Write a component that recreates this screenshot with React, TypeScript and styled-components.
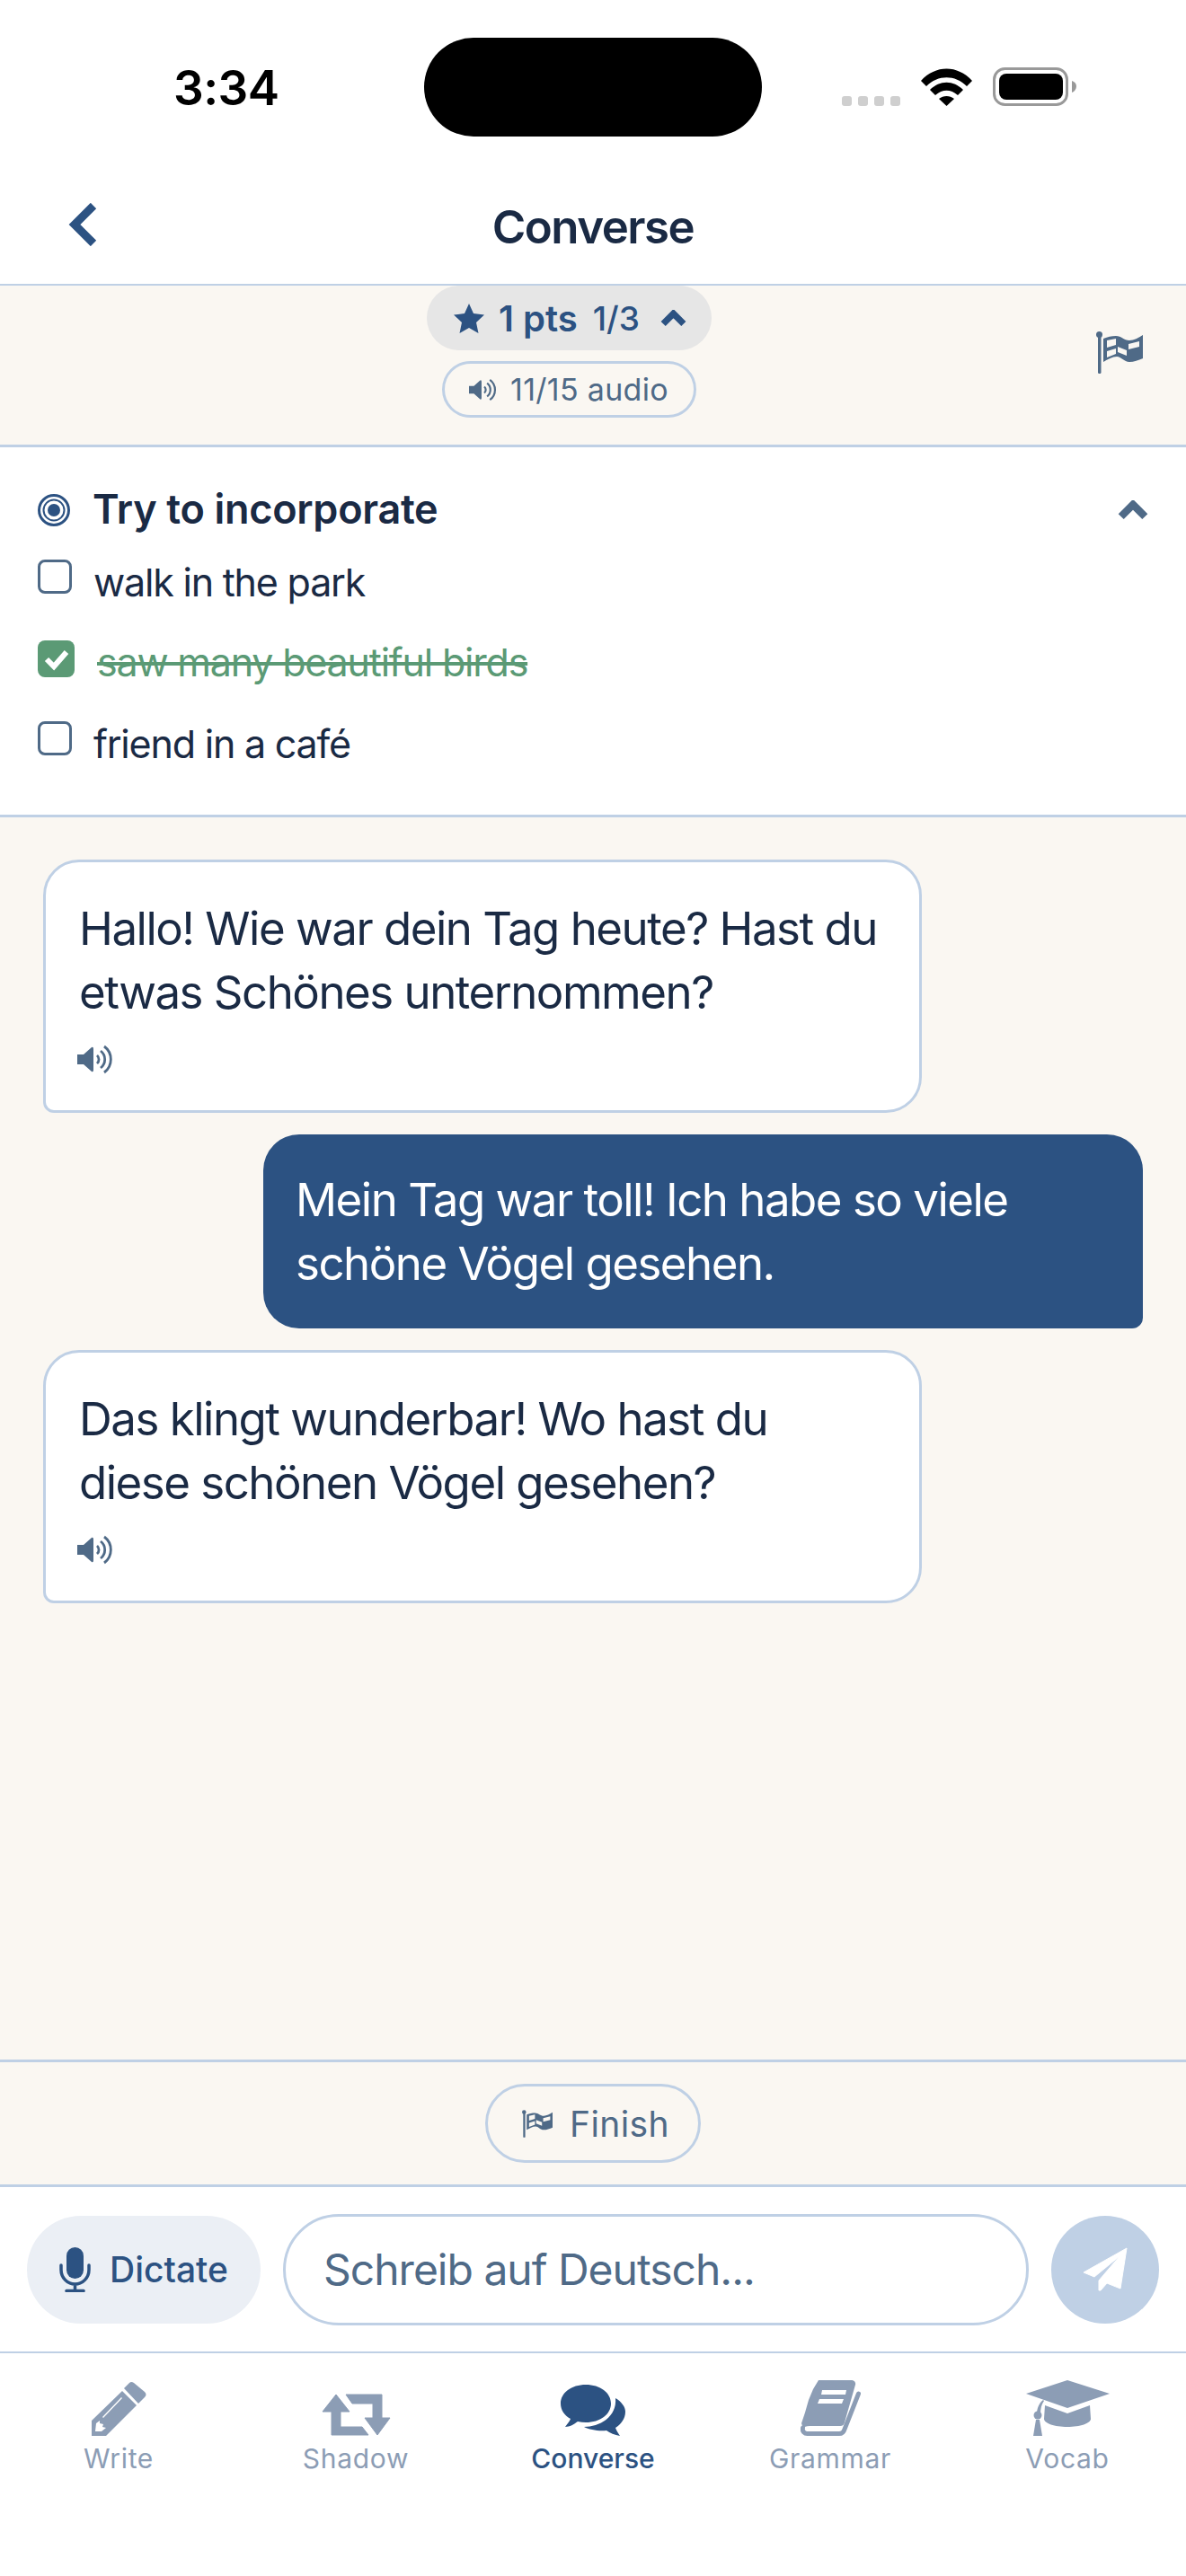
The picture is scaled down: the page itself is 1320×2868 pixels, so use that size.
import styled, { createGlobalStyle } from "styled-components";

const ink = "#1a2a44";
const blue = "#2c5282";
const muted = "#4f6a87";
const line = "#bfd0e5";
const cream = "#faf7f2";
const navGrey = "#8c9db5";
const green = "#5b9a75";

const GlobalStyle = createGlobalStyle`
  html, body {
    margin: 0;
    padding: 0;
    background: #ffffff;
  }
  * {
    box-sizing: border-box;
  }
  body {
    font-family: Inter, "Noto Sans", sans-serif;
  }
`;

const Page = styled.div`
  display: flex;
  flex-direction: column;
  width: 1320px;
  height: 2868px;
  color: ${ink};
  background: #ffffff;
`;

const StatusBar = styled.div`
  display: grid;
  grid-template-columns: 472px 376px 1fr;
  height: 152px;
  padding-top: 42px;
  flex-shrink: 0;
`;

const Time = styled.div`
  padding-left: 193px;
  padding-top: 29px;
  font-size: 53px;
  line-height: 54px;
  font-weight: 600;
  letter-spacing: -0.5px;
  color: #000000;
`;

const Island = styled.div`
  height: 110px;
  background: #000000;
  border-radius: 55px;
`;

const StatusIcons = styled.div`
  display: flex;
  align-items: flex-end;
  height: 76px;
  padding-left: 89px;
`;

const Dots = styled.div`
  display: flex;
  gap: 7px;
  margin-right: 23px;
`;

const Dot = styled.span`
  width: 11px;
  height: 11px;
  border-radius: 3px;
  background: #cfcfcf;
`;

const Header = styled.div`
  display: flex;
  align-items: center;
  justify-content: center;
  position: relative;
  height: 166px;
  flex-shrink: 0;
  border-bottom: 2px solid ${line};
`;

const BackIcon = styled.svg`
  position: absolute;
  left: 76px;
  top: 74px;
`;

const Title = styled.h1`
  margin: 0;
  padding-top: 36px;
  font-size: 51px;
  font-weight: 600;
  letter-spacing: -1.5px;
  color: ${ink};
`;

const StatsBar = styled.div`
  display: flex;
  height: 180px;
  flex-shrink: 0;
  background: ${cream};
  border-bottom: 3px solid ${line};
`;

const PillColumn = styled.div`
  display: flex;
  flex: 1;
  flex-direction: column;
  align-items: center;
  gap: 12px;
  padding-left: 47px;
`;

const PointsPill = styled.div`
  display: flex;
  align-items: center;
  width: 317px;
  height: 72px;
  padding-left: 30px;
  border-radius: 36px;
  background: #e6e6e6;
  color: ${blue};
`;

const Points = styled.span`
  margin-left: 16px;
  font-size: 40px;
  font-weight: 600;
`;

const Level = styled.span`
  margin-left: 17px;
  margin-right: 23px;
  font-size: 37px;
  font-weight: 500;
`;

const AudioPill = styled.div`
  display: flex;
  align-items: center;
  gap: 15px;
  width: 283px;
  height: 63px;
  padding-left: 27px;
  border: 3px solid ${line};
  border-radius: 32px;
  font-size: 34px;
  font-weight: 400;
  letter-spacing: 0.3px;
  color: ${muted};
`;

const FlagSlot = styled.div`
  margin: 51px 48px 0 0;
`;

const GoalPanel = styled.div`
  display: flex;
  flex-direction: column;
  height: 412px;
  flex-shrink: 0;
  padding: 52px 42px 0 42px;
  border-bottom: 3px solid ${line};
  background: #ffffff;
`;

const GoalHead = styled.div`
  display: flex;
  align-items: center;
  height: 36px;
  margin-bottom: 37px;
`;

const GoalTitle = styled.div`
  flex: 1;
  margin-left: 25px;
  margin-top: -3px;
  font-size: 45px;
  font-weight: 600;
  letter-spacing: -0.3px;
  color: ${ink};
`;

const GoalRow = styled.div`
  display: flex;
  align-items: flex-start;
  height: 90px;
`;

const Box = styled.span`
  display: block;
  flex-shrink: 0;
  width: 38px;
  height: 38px;
  border: 3px solid ${muted};
  border-radius: 8px;
`;

const CheckedBox = styled.span`
  display: flex;
  align-items: center;
  justify-content: center;
  flex-shrink: 0;
  width: 41px;
  height: 41px;
  border-radius: 8px;
  background: ${green};
`;

const GoalText = styled.span<{ $done?: boolean }>`
  margin-left: ${(p) => (p.$done ? "25px" : "24px")};
  margin-top: ${(p) => (p.$done ? "-2px" : "-1px")};
  font-size: 43px;
  line-height: 52px;
  letter-spacing: -1.2px;
  color: ${(p) => (p.$done ? green : ink)};
  text-decoration: ${(p) => (p.$done ? "line-through" : "none")};
`;

const Chat = styled.div`
  display: flex;
  flex: 1;
  flex-direction: column;
  gap: 24px;
  padding: 47px 48px;
  background: ${cream};
`;

const TutorBubble = styled.div`
  width: 978px;
  height: 282px;
  padding: 38px 36px 0 37px;
  border: 3px solid ${line};
  border-radius: 40px 40px 40px 12px;
  background: #ffffff;
  font-size: 51px;
  line-height: 71px;
  letter-spacing: -1.5px;
  color: ${ink};
`;

const UserBubble = styled.div`
  align-self: flex-end;
  width: 979px;
  height: 216px;
  padding: 37px 36px;
  border-radius: 40px 40px 12px 40px;
  background: ${blue};
  font-size: 51px;
  line-height: 71px;
  letter-spacing: -1.5px;
  color: #ffffff;
`;

const BubbleAudio = styled.div`
  margin-top: 23px;
  margin-left: -2px;
  line-height: 0;
`;

const FinishBar = styled.div`
  display: flex;
  justify-content: center;
  align-items: center;
  height: 142px;
  flex-shrink: 0;
  border-top: 3px solid ${line};
  border-bottom: 3px solid ${line};
  background: ${cream};
`;

const FinishButton = styled.button`
  display: flex;
  align-items: center;
  gap: 19px;
  width: 240px;
  height: 88px;
  padding: 0 0 0 38px;
  border: 3px solid ${line};
  border-radius: 44px;
  background: transparent;
  font-family: inherit;
  font-size: 39px;
  font-weight: 400;
  letter-spacing: 0.4px;
  color: ${muted};
`;

const Composer = styled.div`
  display: flex;
  align-items: center;
  height: 185px;
  flex-shrink: 0;
  padding: 0 30px;
  border-bottom: 2px solid ${line};
`;

const DictateButton = styled.button`
  display: flex;
  align-items: center;
  gap: 21px;
  flex-shrink: 0;
  width: 260px;
  height: 120px;
  padding: 0 0 0 36px;
  border: none;
  border-radius: 60px;
  background: #ebeff5;
  font-family: inherit;
  font-size: 39px;
  font-weight: 500;
  color: ${blue};
`;

const MessageInput = styled.input`
  width: 830px;
  height: 124px;
  margin: 0 25px;
  padding: 0 42px;
  border: 3px solid ${line};
  border-radius: 62px;
  outline: none;
  background: #ffffff;
  font-family: inherit;
  font-size: 48px;
  letter-spacing: -1px;
  color: ${muted};

  &::placeholder {
    color: ${muted};
    opacity: 1;
  }
`;

const SendButton = styled.button`
  display: flex;
  align-items: center;
  justify-content: center;
  flex-shrink: 0;
  width: 120px;
  height: 120px;
  padding: 0;
  border: none;
  border-radius: 50%;
  background: ${line};
`;

const TabBar = styled.nav`
  display: grid;
  grid-template-columns: repeat(5, 1fr);
  flex-shrink: 0;
  height: 248px;
  padding-top: 30px;
`;

const Tab = styled.div<{ $active?: boolean }>`
  display: flex;
  flex-direction: column;
  align-items: center;
  color: ${(p) => (p.$active ? blue : navGrey)};
`;

const TabIcon = styled.div`
  display: flex;
  align-items: flex-end;
  height: 62px;
`;

const TabLabel = styled.span<{ $active?: boolean }>`
  margin-top: 7px;
  font-size: 30px;
  line-height: 36px;
  font-weight: ${(p) => (p.$active ? 500 : 400)};
  letter-spacing: ${(p) => (p.$active ? "0" : "0.7px")};
`;

const Chevron = ({ color, width = 28 }: { color: string; width?: number }) => (
  <svg width={width} height={width * 0.64} viewBox="0 0 28 18">
    <path d="M3 15 14 4l11 11" fill="none" stroke={color} strokeWidth="7" />
  </svg>
);

const Speaker = ({ width, height }: { width: number; height: number }) => (
  <svg width={width} height={height} viewBox="0 0 40 33" fill="none">
    <path d="M0 11h7l9-8q2-1 2 2v23q0 3-2 2l-9-8H0z" fill={muted} />
    <path
      d="M22 12a6 6 0 0 1 0 9M26 7a12 12 0 0 1 0 19M30 2a18 18 0 0 1 0 29"
      stroke={muted}
      strokeWidth="2.8"
    />
  </svg>
);

const CheckerFlag = ({ width, height }: { width: number; height: number }) => (
  <svg width={width} height={height} viewBox="0 0 52 47">
    <circle cx="3.5" cy="3.5" r="3.5" fill={muted} />
    <rect x="2" y="3" width="3.5" height="44" rx="1.5" fill={muted} />
    <path
      d="M8 8c5-2 9-3 14-3 6 0 9 5 15 5 5 0 10-3 15-6v26c-5 2-10 4-15 4-6 0-9-6-14-6-5 0-10 3-15 6z"
      fill={muted}
    />
    <path d="M12 10l10-2v7l-10 3zM36 14l12-3v6l-12 3zM24 17l10 4v6l-10-4zM12 22l10-3v6l-10 4z" fill={cream} />
  </svg>
);

const Pencil = () => (
  <svg width="61" height="61" viewBox="0 0 61 61" fill="currentColor">
    <path d="M36 8l6-6q2-2 5 0l12 10q3 3 0 6l-7 7z" />
    <path
      d="M34 11l16 16-34 34H0V44zM34 19l-1-1-21 22 1 1zM5 47l-1 9 7 0 5-4-4-1 1-3-4-1 0-3z"
      fillRule="evenodd"
    />
  </svg>
);

const Retweet = () => (
  <svg
    width="77"
    height="47"
    viewBox="0 0 77 47"
    fill="currentColor"
    stroke="currentColor"
    strokeWidth="1"
    strokeLinejoin="round"
  >
    <path d="M16 1 31 20H21V37H45L52 46H11V20H1z" />
    <path d="M27 1H67V27H76L62 46 48 27H57V11H34z" />
  </svg>
);

const Comments = () => (
  <svg width="72" height="57" viewBox="0 0 72 57" fill="currentColor">
    <path d="M28 0c16 0 28 9 28 21s-12 21-28 21c-3 0-6-.3-9-1-4 3-9 6-14 6 2-3 5-6 6-9C4 34 0 28 0 21 0 9 12 0 28 0z" />
    <path d="M61 15c7 4 11 10 11 15 0 8-5 14-11 18 1 3 3 6 5 9-6-1-11-3-15-6-9 1-19-1-25-4 17 0 37-11 35-32z" />
  </svg>
);

const Book = () => (
  <svg width="67" height="62" viewBox="0 0 67 62" fill="currentColor">
    <path
      fillRule="evenodd"
      d="M20 0h37a4 4 0 0 1 4 5L49 47a5 5 0 0 1-5 4H10c-4 0-6 1-7 3L1 48l4-12 4-14 5-12zM24 11l-1 5h27l1-5zM21 21l-2 5h27l2-5z"
    />
    <path
      d="M2.5 53c-1 4 2 6.500 5 6.500H43c3 0 5-1.500 6-5L64.500 15"
      fill="none"
      stroke="currentColor"
      strokeWidth="5"
      strokeLinecap="round"
    />
  </svg>
);

const Cap = () => (
  <svg width="93" height="62" viewBox="0 0 93 62" fill="currentColor">
    <path d="M46 0 93 15 46 31 0 15z" />
    <path d="M21 28l25 9 25-9 1 15c0 5-12 9-26 9s-26-4-26-9z" />
    <path d="M19 22l1 1c-3 4-4 9-4 15h-4c0-6 2-12 7-16z" />
    <circle cx="13" cy="39" r="4.500" />
    <path d="M11 44h4l3 18H8z" />
  </svg>
);

const TutorMessage = ({ text }: { text: string[] }) => (
  <TutorBubble>
    {text[0]}
    <br />
    {text[1]}
    <BubbleAudio>
      <Speaker width={40} height={33} />
    </BubbleAudio>
  </TutorBubble>
);

const App = () => {
  return (
    <Page>
      <GlobalStyle />
      <StatusBar>
        <Time>3:34</Time>
        <Island />
        <StatusIcons>
          <Dots>
            <Dot />
            <Dot />
            <Dot />
            <Dot />
          </Dots>
          <svg width="57" height="42" viewBox="0 0 57 42">
            <path d="M0 14C16-4 41-4 57 14l-6 6C38 7 19 7 6 20z" />
            <path d="M10 24c11-11 26-11 37 0l-6 6c-8-7-17-7-25 0z" />
            <path d="M20 34c5-4 12-4 17 0l-8.500 8z" />
          </svg>
          <svg width="93" height="43" viewBox="0 0 93 43" style={{ marginLeft: 23 }}>
            <rect x="1.500" y="1.500" width="81" height="40" rx="12" fill="none" stroke="#999999" strokeWidth="3" />
            <rect x="7" y="7" width="71" height="29" rx="8" fill="#000000" />
            <path d="M88 15c3 1 5 3 5 6s-2 6-5 7z" fill="#999999" />
          </svg>
        </StatusIcons>
      </StatusBar>

      <Header>
        <BackIcon width="32" height="48" viewBox="0 0 32 48">
          <path d="M28 3 7 24l21 21" fill="none" stroke={blue} strokeWidth="9" />
        </BackIcon>
        <Title>Converse</Title>
      </Header>

      <StatsBar>
        <PillColumn>
          <PointsPill>
            <svg width="34" height="33" viewBox="0 0 34 33">
              <path d="M17 0l5 11 12 1.500-9 8.500 2.500 12L17 27l-10.500 6L9 21 0 12.500 12 11z" fill={blue} />
            </svg>
            <Points>1 pts</Points>
            <Level>1/3</Level>
            <Chevron color={blue} width={29} />
          </PointsPill>
          <AudioPill>
            <Speaker width={31} height={26} />
            11/15 audio
          </AudioPill>
        </PillColumn>
        <FlagSlot>
          <CheckerFlag width={52} height={47} />
        </FlagSlot>
      </StatsBar>

      <GoalPanel>
        <GoalHead>
          <svg width="36" height="36" viewBox="0 0 36 36" fill="none">
            <circle cx="18" cy="18" r="16.500" stroke={blue} strokeWidth="3" />
            <circle cx="18" cy="18" r="11.500" stroke={blue} strokeWidth="2" />
            <circle cx="18" cy="18" r="7" fill={blue} />
          </svg>
          <GoalTitle>Try to incorporate</GoalTitle>
          <Chevron color={muted} width={34} />
        </GoalHead>
        <GoalRow>
          <Box />
          <GoalText>walk in the park</GoalText>
        </GoalRow>
        <GoalRow>
          <CheckedBox>
            <svg width="30" height="26" viewBox="0 0 30 26">
              <path d="M4 13l8 8L26 5" fill="none" stroke="#ffffff" strokeWidth="6" />
            </svg>
          </CheckedBox>
          <GoalText $done>saw many beautiful birds</GoalText>
        </GoalRow>
        <GoalRow>
          <Box />
          <GoalText>friend in a café</GoalText>
        </GoalRow>
      </GoalPanel>

      <Chat>
        <TutorMessage text={["Hallo! Wie war dein Tag heute? Hast du", "etwas Schönes unternommen?"]} />
        <UserBubble>
          Mein Tag war toll! Ich habe so viele
          <br />
          schöne Vögel gesehen.
        </UserBubble>
        <TutorMessage text={["Das klingt wunderbar! Wo hast du", "diese schönen Vögel gesehen?"]} />
      </Chat>

      <FinishBar>
        <FinishButton>
          <CheckerFlag width={34} height={31} />
          Finish
        </FinishButton>
      </FinishBar>

      <Composer>
        <DictateButton>
          <svg width="35" height="50" viewBox="0 0 35 50" fill="none">
            <rect x="8" y="0" width="19" height="35" rx="9.500" fill={blue} />
            <path
              d="M2 20v5c0 9 7 16 15.500 16S33 34 33 25v-5M17.500 41v6"
              stroke={blue}
              strokeWidth="3.500"
              strokeLinecap="round"
            />
            <path d="M8 48.500h19" stroke={blue} strokeWidth="3.500" strokeLinecap="round" />
          </svg>
          Dictate
        </DictateButton>
        <MessageInput placeholder="Schreib auf Deutsch..." readOnly />
        <SendButton>
          <svg width="50" height="49" viewBox="0 0 50 49">
            <path
              d="M1 28 49 1l-7 45-15-6-7 8h-2V37L41 10 13 33z"
              fill="#ffffff"
              stroke="#ffffff"
              strokeWidth="1"
              strokeLinejoin="round"
            />
          </svg>
        </SendButton>
      </Composer>

      <TabBar>
        <Tab>
          <TabIcon>
            <Pencil />
          </TabIcon>
          <TabLabel>Write</TabLabel>
        </Tab>
        <Tab>
          <TabIcon>
            <Retweet />
          </TabIcon>
          <TabLabel>Shadow</TabLabel>
        </Tab>
        <Tab $active>
          <TabIcon>
            <Comments />
          </TabIcon>
          <TabLabel $active>Converse</TabLabel>
        </Tab>
        <Tab>
          <TabIcon>
            <Book />
          </TabIcon>
          <TabLabel>Grammar</TabLabel>
        </Tab>
        <Tab>
          <TabIcon>
            <Cap />
          </TabIcon>
          <TabLabel>Vocab</TabLabel>
        </Tab>
      </TabBar>
    </Page>
  );
};

export default App;
